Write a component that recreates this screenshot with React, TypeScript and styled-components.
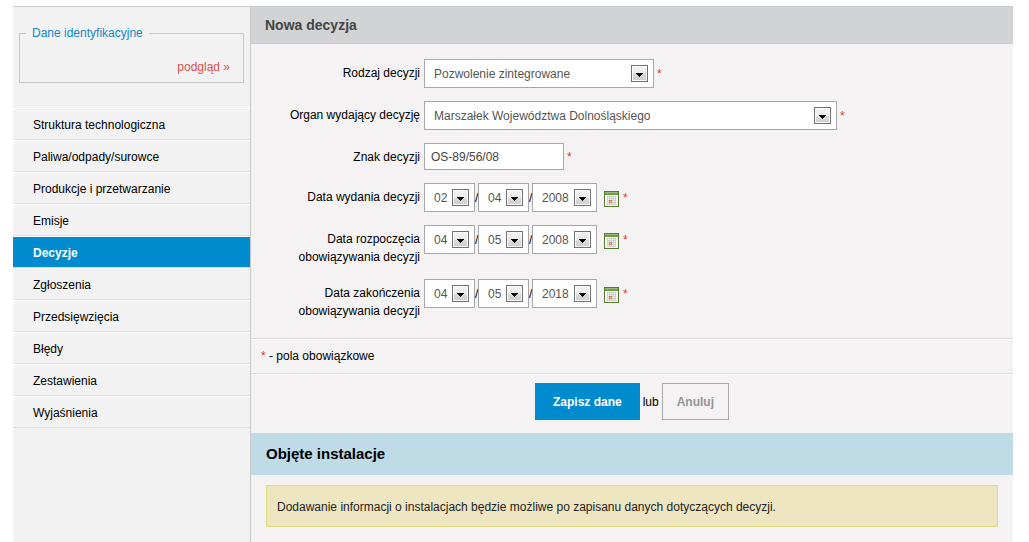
import React from "react";
import styled, { createGlobalStyle } from "styled-components";

const GlobalStyle = createGlobalStyle`
  *, *::before, *::after { box-sizing: border-box; }
  body {
    margin: 0;
    background: #fff;
    color: #000;
    font: 12px/18px "Liberation Sans", Arial, sans-serif;
  }
  button, input, select { font: inherit; }
`;

const Page = styled.div`
  display: grid;
  grid-template-columns: 238px 1fr;
  min-height: 100vh;
  padding: 6px 16px 0 13px;
`;

const Sidebar = styled.aside`
  background: #f2f2f2;
  border-top: 1px solid #ccc;
  border-right: 1px solid #c8c8c8;
`;

const Identity = styled.fieldset`
  margin: 17px 6px 25px;
  padding: 16px 13px 6px;
  border: 1px solid #c8c8c8;
  text-align: right;

  legend {
    margin-left: -7px;
    padding: 0 6px;
    color: #0f88cc;
    text-align: left;
  }
`;

const PreviewLink = styled.a`
  color: #d9534f;
  text-decoration: none;
`;

const Menu = styled.ul`
  margin: 0;
  padding: 0;
  list-style: none;
`;

const MenuItem = styled.li`
  border-top: 1px solid #fff;
  border-bottom: 1px solid #dedede;
`;

const MenuLink = styled.a<{ $active: boolean }>`
  display: block;
  padding: 7px 20px 5px;
  background: ${(p) => (p.$active ? "#008bce" : "transparent")};
  color: ${(p) => (p.$active ? "#fff" : "#000")};
  font-weight: ${(p) => (p.$active ? "bold" : "normal")};
  text-decoration: none;
`;

const Main = styled.main`
  background: #f4f2f3;
`;

const PageTitle = styled.h1`
  margin: 0;
  padding: 9px 14px;
  border: 1px solid #c8c8c8;
  border-width: 1px 0;
  background: #d1d3d4;
  color: #444;
  font-size: 14px;
  line-height: 18px;
`;

const Fields = styled.div`
  display: grid;
  gap: 13px;
  padding: 15px 0 18px;
`;

const Field = styled.div`
  display: grid;
  grid-template-columns: 169px 1fr;
  column-gap: 4px;
  align-items: start;
`;

const FieldLabel = styled.label`
  padding-top: 5px;
  text-align: right;
`;

const Controls = styled.div`
  display: flex;
  align-items: center;
`;

const SelectBox = styled.div<{ $width: number }>`
  display: grid;
  align-items: center;
  width: ${(p) => p.$width}px;

  > * { grid-area: 1 / 1; }
`;

const NativeSelect = styled.select`
  appearance: none;
  width: 100%;
  height: 29px;
  margin: 0;
  padding: 1px 24px 0 9px;
  border: 1px solid #a7a7a9;
  border-radius: 0;
  background: #fff;
  color: #555;
`;

const ArrowBox = styled.svg`
  justify-self: end;
  margin-right: 6px;
  pointer-events: none;
`;

const TextInput = styled.input`
  width: 140px;
  height: 27px;
  margin: 0;
  padding: 0 6px;
  border: 1px solid #a7a7a9;
  border-radius: 0;
  background: #fff;
  color: #444;
`;

const Slash = styled.span`
  width: 3px;
`;

const CalendarButton = styled.button`
  display: flex;
  margin: 2px 1px 0 7px;
  padding: 0;
  border: 0;
  background: none;
`;

const Star = styled.span`
  color: #d43f2f;
`;

const FieldStar = styled(Star)`
  margin-left: 3px;
`;

const Legend = styled.p`
  margin: 0;
  padding: 8px 10px;
  border: 1px solid #dadada;
  border-width: 1px 0;
  box-shadow: 0 1px 0 #fff, inset 0 1px 0 #fff;
`;

const Actions = styled.div`
  display: flex;
  justify-content: center;
  align-items: center;
  gap: 3px;
  padding: 9px 0 13px;
`;

const ActionButton = styled.button<{ $primary?: boolean }>`
  height: 37px;
  padding: 0 ${(p) => (p.$primary ? 18 : 14)}px;
  border: ${(p) => (p.$primary ? "0" : "1px solid #a7a7a9")};
  background: ${(p) => (p.$primary ? "#008bce" : "transparent")};
  color: ${(p) => (p.$primary ? "#fff" : "#949494")};
  font-weight: bold;
`;

const SectionTitle = styled.h2`
  margin: 0;
  padding: 12px 15px;
  background: #bfdbe6;
  font-size: 15px;
  line-height: 18px;
`;

const Notice = styled.p`
  margin: 10px 15px 15px;
  padding: 12px 10px 10px;
  border: 1px solid #dfdd82;
  background: #eee5c1;
  color: #222;
`;

const menu = [
  "Struktura technologiczna",
  "Paliwa/odpady/surowce",
  "Produkcje i przetwarzanie",
  "Emisje",
  "Decyzje",
  "Zgłoszenia",
  "Przedsięwzięcia",
  "Błędy",
  "Zestawienia",
  "Wyjaśnienia",
];

function Select({ id, label, value, width }: { id: string; label?: string; value: string; width: number }) {
  return (
    <SelectBox $width={width}>
      <NativeSelect id={id} aria-label={label} defaultValue={value}>
        <option>{value}</option>
      </NativeSelect>
      <ArrowBox width="17" height="17" viewBox="0 0 17 17" shapeRendering="crispEdges" aria-hidden="true">
        <defs>
          <linearGradient id={`${id}-shade`} x1="0" y1="0" x2="0" y2="1">
            <stop offset="0" stopColor="#f2f2f2" />
            <stop offset="0.5" stopColor="#ebebeb" />
            <stop offset="0.5" stopColor="#dddddd" />
            <stop offset="1" stopColor="#cfcfcf" />
          </linearGradient>
        </defs>
        <rect width="17" height="17" fill="#707070" />
        <rect x="1" y="1" width="15" height="15" fill="#fafafa" />
        <rect x="2" y="2" width="13" height="13" fill={`url(#${id}-shade)`} />
        <path d="M5 8h7v1h-1v1h-1v1H9v1H8v-1H7v-1H6V9H5z" fill="#000" />
      </ArrowBox>
    </SelectBox>
  );
}

function CalendarIcon() {
  const steps = [0, 1, 2, 3];
  return (
    <svg width="15" height="16" viewBox="0 0 15 16" shapeRendering="crispEdges" aria-hidden="true">
      <rect width="15" height="16" fill="#54792f" />
      <rect x="1" y="1" width="13" height="1" fill="#9dbd7c" />
      <rect x="1" y="2" width="13" height="2" fill="#6f9c46" />
      <rect x="1" y="4" width="13" height="11" fill="#f6f7f3" />
      <rect x="3" y="5" width="9" height="9" fill="#cdcfcd" />
      {steps.map((r) =>
        steps.map((c) => <rect key={`${r}${c}`} x={4 + c * 2} y={6 + r * 2} width="1" height="1" fill="#fff" />)
      )}
      <path d="M5 9h3v3H5z" fill="#d9785a" />
      <rect x="6" y="10" width="1" height="1" fill="#f7d9cd" />
    </svg>
  );
}

function DateField({ id, label, parts }: { id: string; label: React.ReactNode; parts: [string, string, string] }) {
  return (
    <Field>
      <FieldLabel htmlFor={`${id}-day`}>{label}</FieldLabel>
      <Controls>
        <Select id={`${id}-day`} value={parts[0]} width={51} />
        <Slash>/</Slash>
        <Select id={`${id}-month`} label="Miesiąc" value={parts[1]} width={51} />
        <Slash>/</Slash>
        <Select id={`${id}-year`} label="Rok" value={parts[2]} width={65} />
        <CalendarButton type="button" aria-label="Kalendarz">
          <CalendarIcon />
        </CalendarButton>
        <FieldStar>*</FieldStar>
      </Controls>
    </Field>
  );
}

export default function App() {
  return (
    <>
      <GlobalStyle />
      <Page>
        <Sidebar>
          <Identity>
            <legend>Dane identyfikacyjne</legend>
            <PreviewLink href="#podglad">podgląd »</PreviewLink>
          </Identity>
          <nav>
            <Menu>
              {menu.map((name) => (
                <MenuItem key={name}>
                  <MenuLink href="#" $active={name === "Decyzje"}>
                    {name}
                  </MenuLink>
                </MenuItem>
              ))}
            </Menu>
          </nav>
        </Sidebar>
        <Main>
          <PageTitle>Nowa decyzja</PageTitle>
          <form onSubmit={(e) => e.preventDefault()}>
            <Fields>
              <Field>
                <FieldLabel htmlFor="rodzaj">Rodzaj decyzji</FieldLabel>
                <Controls>
                  <Select id="rodzaj" value="Pozwolenie zintegrowane" width={230} />
                  <FieldStar>*</FieldStar>
                </Controls>
              </Field>
              <Field>
                <FieldLabel htmlFor="organ">Organ wydający decyzję</FieldLabel>
                <Controls>
                  <Select id="organ" value="Marszałek Województwa Dolnośląskiego" width={413} />
                  <FieldStar>*</FieldStar>
                </Controls>
              </Field>
              <Field>
                <FieldLabel htmlFor="znak">Znak decyzji</FieldLabel>
                <Controls>
                  <TextInput id="znak" type="text" defaultValue="OS-89/56/08" />
                  <FieldStar>*</FieldStar>
                </Controls>
              </Field>
              <DateField id="wydanie" label="Data wydania decyzji" parts={["02", "04", "2008"]} />
              <DateField
                id="start"
                label={<>Data rozpoczęcia<br />obowiązywania decyzji</>}
                parts={["04", "05", "2008"]}
              />
              <DateField
                id="koniec"
                label={<>Data zakończenia<br />obowiązywania decyzji</>}
                parts={["04", "05", "2018"]}
              />
            </Fields>
            <Legend>
              <Star>*</Star> - pola obowiązkowe
            </Legend>
            <Actions>
              <ActionButton type="submit" $primary>Zapisz dane</ActionButton>
              <span>lub</span>
              <ActionButton type="button">Anuluj</ActionButton>
            </Actions>
          </form>
          <SectionTitle>Objęte instalacje</SectionTitle>
          <Notice>Dodawanie informacji o instalacjach będzie możliwe po zapisanu danych dotyczących decyzji.</Notice>
        </Main>
      </Page>
    </>
  );
}
